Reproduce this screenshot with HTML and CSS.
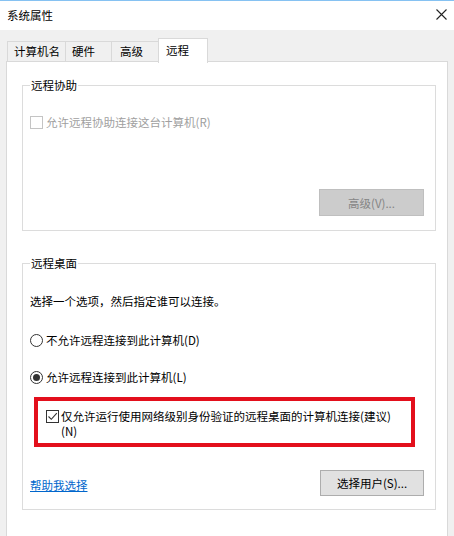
FILE: index.html
```html
<!DOCTYPE html>
<html lang="zh-CN">
<head>
<meta charset="utf-8">
<title>系统属性</title>
<link rel="stylesheet" href="styles.css">
</head>
<body>
<div class="window">
  <div class="titlebar">
    <span class="title">系统属性</span>
    <svg class="close" width="11" height="11" viewBox="0 0 11 11"><path d="M0.5 0.5 L10.5 10.5 M10.5 0.5 L0.5 10.5" stroke="#222" stroke-width="1.1" fill="none"/></svg>
  </div>
  <div class="body">
    <div class="tabs">
      <div class="tab t1">计算机名</div>
      <div class="tab t2">硬件</div>
      <div class="tab t3">高级</div>
      <div class="tab active">远程</div>
    </div>
    <div class="panel">
      <fieldset class="group g1">
        <legend>远程协助</legend>
        <div class="row disabled">
          <span class="check dis"></span>
          <span>允许远程协助连接这台计算机(R)</span>
        </div>
        <div class="btnrow">
          <div class="btn btn-dis">高级(V)...</div>
        </div>
      </fieldset>
      <fieldset class="group g2">
        <legend>远程桌面</legend>
        <div class="row intro">选择一个选项，然后指定谁可以连接。</div>
        <div class="row radio1">
          <span class="radio"></span>
          <span>不允许远程连接到此计算机(D)</span>
        </div>
        <div class="row radio2">
          <span class="radio on"></span>
          <span>允许远程连接到此计算机(L)</span>
        </div>
        <div class="highlight">
          <span class="check on"><svg width="11" height="11" viewBox="0 0 11 11"><path d="M1.5 5.5 L4.3 8.3 L9.8 2.2" stroke="#333" stroke-width="1.1" fill="none"/></svg></span>
          <span class="hl-text"><span class="hl-line">仅允许运行使用网络级别身份验证的远程桌面的计算机连接(建议)</span><span class="hl-line">(N)</span></span>
        </div>
        <div class="bottomrow">
          <a class="link" href="#">帮助我选择</a>
          <div class="btn btn-norm">选择用户(S)...</div>
        </div>
      </fieldset>
    </div>
  </div>
</div>
</body>
</html>
```
FILE: styles.css
```css
* { box-sizing: border-box; }
html, body {
  margin: 0;
  padding: 0;
  width: 454px;
  height: 536px;
  overflow: hidden;
  background: #f0f0f0;
  font-family: "Noto Sans CJK SC", "Microsoft YaHei", sans-serif;
  font-size: 11.5px;
  color: #000;
}
.window {
  height: 536px;
  border-top: 1px solid #86c2f2;
  display: flex;
  flex-direction: column;
}
.titlebar {
  height: 29px;
  background: #fff;
  display: flex;
  align-items: center;
  justify-content: space-between;
  padding: 0 7px 1px 7px;
}
.title { font-size: 11.5px; line-height: 16px; }
.close { margin-top: -1px; }
.body {
  flex: 1;
  background: #f0f0f0;
  padding: 7px 6px 0 6px;
  display: flex;
  flex-direction: column;
}
.tabs {
  display: flex;
  align-items: flex-end;
  height: 25px;
  position: relative;
  z-index: 2;
  padding-left: 1px;
}
.tab {
  height: 20px;
  line-height: 19px;
  border: 1px solid #d9d9d9;
  border-bottom: none;
  border-right: none;
  background: #f0f0f0;
  padding-left: 6px;
  margin-bottom: 1px;
}
.t1 { width: 58px; }
.t2 { width: 46px; }
.t3 { width: 47px; padding-left: 8px; }
.active {
  width: 50px;
  height: 25px;
  background: #fff;
  border-right: 1px solid #d9d9d9;
  margin-bottom: -1px;
  padding-left: 7px;
  padding-bottom: 2px;
  line-height: 22px;
}
.panel {
  flex: 1;
  width: 442px;
  background: #fff;
  border: 1px solid #d9d9d9;
  border-bottom: none;
  padding: 15px 12px 0 15px;
  margin-top: -1px;
}
.group {
  margin: 0;
  width: 414px;
  border: 1px solid #dcdcdc;
  padding: 0 11px 0 7px;
}
.group legend {
  padding: 0 1px;
  margin-left: 0;
  line-height: 16px;
}
.g1 { padding-bottom: 14px; }
.g2 { margin-top: 24px; padding-bottom: 13px; }
.row {
  display: flex;
  align-items: center;
  line-height: 16px;
  height: 16px;
}
.g1 .row { margin-top: 21px; }
.disabled { color: #a0a0a0; }
.check {
  width: 13px;
  height: 13px;
  border: 1px solid #333;
  background: #fff;
  margin-right: 3px;
  flex: none;
  display: flex;
  align-items: center;
  justify-content: center;
}
.check.dis { border-color: #c4c4c4; }
.radio {
  width: 13px;
  height: 13px;
  border: 1px solid #333;
  border-radius: 50%;
  background: #fff;
  margin-right: 3px;
  flex: none;
  display: flex;
  align-items: center;
  justify-content: center;
}
.radio.on::after {
  content: "";
  width: 7px;
  height: 7px;
  border-radius: 50%;
  background: #333;
}
.btnrow {
  display: flex;
  justify-content: flex-end;
  margin-top: 59px;
}
.btn {
  width: 105px;
  height: 27px;
  display: flex;
  align-items: center;
  justify-content: center;
}
.btn-dis {
  background: #cccccc;
  border: 1px solid #bfbfbf;
  color: #858585;
}
.intro { margin-top: 22px; }
.radio1 { margin-top: 23px; }
.radio2 { margin-top: 21px; }
.highlight {
  margin-top: 12px;
  margin-left: 4px;
  width: 381px;
  height: 50px;
  border: 4px solid #e30f1c;
  display: flex;
  align-items: flex-start;
  padding: 8px 0 0 8px;
}
.highlight .check { margin-top: 1px; margin-right: 2px; }
.hl-text {
  display: flex;
  flex-direction: column;
}
.hl-line {
  display: block;
  height: 15px;
  line-height: 15px;
  overflow: visible;
}
.bottomrow {
  display: flex;
  justify-content: space-between;
  align-items: center;
  margin-top: 23px;
}
.link {
  color: #0066cc;
  text-decoration: underline;
  margin-top: 4px;
}
.btn-norm {
  width: 104px;
  height: 26px;
  background: #e1e1e1;
  border: 1px solid #adadad;
}
```
